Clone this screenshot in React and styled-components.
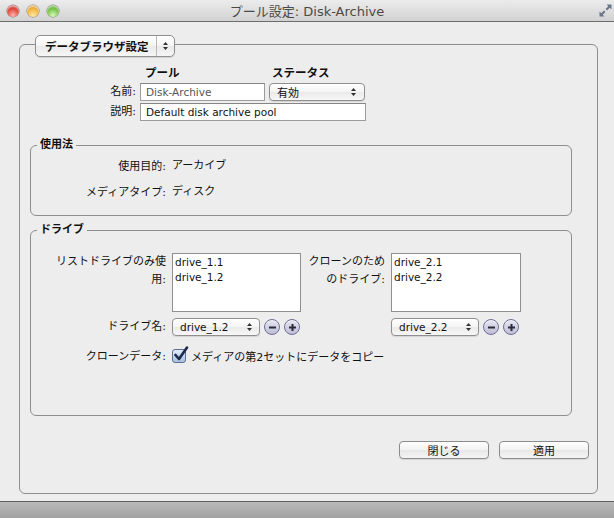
import styled, { createGlobalStyle } from 'styled-components';

const GlobalStyle = createGlobalStyle`
  * { box-sizing: border-box; }
  html, body { margin: 0; padding: 0; background: #ededed; }
  body {
    font-family: "DejaVu Sans", "Noto Sans CJK JP", sans-serif;
    font-size: 11px;
    color: #111;
  }
`;

const Window = styled.div`
  width: 614px;
  height: 518px;
  display: flex;
  flex-direction: column;
  background: #ededed;
  overflow: hidden;
`;

const TitleBar = styled.header`
  flex: none;
  height: 22px;
  display: grid;
  grid-template-columns: 1fr auto 1fr;
  align-items: center;
  padding: 0 4px;
  background: linear-gradient(#ececec, #d2d2d2);
  border-bottom: 1px solid #6d6d6d;
`;

const Lights = styled.div`
  display: flex;
  gap: 8px;
  margin-left: 3px;
`;

const tones = {
  red: ['#ffb3ab', '#e0463b', '#a1231a'],
  yellow: ['#ffe7a6', '#f0b43f', '#b07a1c'],
  green: ['#d6f5b8', '#78c449', '#417f24'],
};

const Light = styled.span`
  width: 12px;
  height: 12px;
  border-radius: 50%;
  background: radial-gradient(
    circle at 50% 85%,
    ${p => tones[p.$tone][0]} 0%,
    ${p => tones[p.$tone][1]} 55%,
    ${p => tones[p.$tone][2]} 100%
  );
  box-shadow: 0 0 0 0.5px rgba(0, 0, 0, 0.45), inset 0 2px 1px rgba(255, 255, 255, 0.55);
`;

const Title = styled.div`
  font-size: 13px;
  color: #4a4a4a;
  white-space: nowrap;
`;

const FullScreen = styled.svg`
  justify-self: end;
  margin-right: -3px;
`;

const Body = styled.main`
  flex: 1;
  display: flex;
  padding: 22px 16px 7px 19px;
  min-height: 0;
`;

const OuterBox = styled.section`
  flex: 1;
  display: flex;
  flex-direction: column;
  border: 1px solid #8e8e8e;
  border-radius: 6px;
  padding: 0 8px 0 10px;
`;

const TabPopup = styled.div`
  align-self: flex-start;
  margin: -10px 0 0 5px;
  width: 140px;
  height: 22px;
  display: flex;
  border: 1px solid #8f8f8f;
  border-radius: 5px;
  background: linear-gradient(#ffffff, #f3f3f3 50%, #e9e9e9 51%, #f6f6f6);
  box-shadow: 0 1px 1px rgba(0, 0, 0, 0.12);
`;

const TabLabel = styled.div`
  flex: 1;
  display: flex;
  align-items: center;
  padding-left: 9px;
  font-size: 11.5px;
  font-weight: bold;
`;

const TabArrows = styled.div`
  width: 18px;
  display: flex;
  align-items: center;
  justify-content: center;
  border-left: 1px solid #b9b9b9;
`;

const PoolGrid = styled.div`
  display: grid;
  grid-template-columns: 106px 125px 97px;
  column-gap: 4px;
  row-gap: 2px;
  margin-top: 5px;
`;

const ColHead = styled.div`
  height: 19px;
  display: flex;
  align-items: center;
  padding-left: ${p => p.$pad}px;
  font-size: 11.5px;
  font-weight: bold;
`;

const FieldLabel = styled.div`
  justify-self: end;
  align-self: ${p => (p.$top ? 'start' : 'center')};
  text-align: right;
  line-height: 18px;
  max-width: ${p => (p.$wrap ? `${p.$wrap}px` : 'none')};
  white-space: ${p => (p.$wrap ? 'normal' : 'nowrap')};
`;

const TextField = styled.input`
  width: 100%;
  height: 18px;
  margin: 0;
  padding: 0 5px;
  border: 1px solid #9c9c9c;
  border-top-color: #858585;
  background: #fff;
  font-family: "DejaVu Sans", "Noto Sans CJK JP", sans-serif;
  font-size: 10.5px;
  color: ${p => (p.$dim ? '#555' : '#111')};
  outline: none;
  grid-column: ${p => p.$span || 'auto'};
`;

const Popup = styled.div`
  width: ${p => p.$w}px;
  height: 18px;
  display: flex;
  align-items: center;
  justify-content: space-between;
  padding: 0 ${p => p.$pr}px 0 7px;
  border: 1px solid #8f8f8f;
  border-radius: 4px;
  background: linear-gradient(#ffffff, #f4f4f4 50%, #eaeaea 51%, #f7f7f7);
  box-shadow: 0 1px 1px rgba(0, 0, 0, 0.1);
  font-size: ${p => (p.$latin ? '10.5px' : '11px')};
  white-space: nowrap;
`;

const Group = styled.fieldset`
  margin: ${p => p.$mt}px 17px 0 0;
  padding: ${p => p.$pt}px 0 ${p => p.$pb}px 0;
  border: 1px solid #8e8e8e;
  border-radius: 6px;
  min-width: 0;
`;

const GroupTitle = styled.legend`
  margin-left: 6px;
  padding: 0 3px;
  font-size: 11px;
  font-weight: bold;
  line-height: 14px;
`;

const InfoGrid = styled.div`
  display: grid;
  grid-template-columns: 135px 1fr;
  column-gap: 6px;
  row-gap: 8px;
  line-height: 16px;
`;

const DriveGrid = styled.div`
  display: grid;
  grid-template-columns: 135px 129px 78px 130px;
  column-gap: 6px;
  row-gap: 6px;
`;

const ListBox = styled.div`
  height: 59px;
  padding: 1px 2px;
  border: 1px solid #8f8f8f;
  background: #fff;
  font-size: 10.5px;
  line-height: 15px;
`;

const PickRow = styled.div`
  display: flex;
  align-items: center;
  gap: 4px;
`;

const RoundButton = styled.span`
  width: 16px;
  height: 16px;
  border-radius: 50%;
  display: flex;
  align-items: center;
  justify-content: center;
  border: 1px solid #6e6e96;
  background: linear-gradient(#e6e6f2, #bdbdd6);
  box-shadow: inset 0 1px 0 rgba(255, 255, 255, 0.7);
`;

const CheckRow = styled.label`
  grid-column: 2 / span 3;
  display: flex;
  align-items: center;
  gap: 5px;
  margin-top: 6px;
  height: 16px;
  white-space: nowrap;
`;

const CheckBox = styled.span`
  position: relative;
  width: 14px;
  height: 14px;
  flex: none;
  border: 1px solid #5f6f8f;
  border-radius: 3px;
  background: linear-gradient(#e4ecf8, #a8c0e2);
`;

const CheckMark = styled.svg`
  position: absolute;
  left: 0px;
  top: -4px;
`;

const ButtonRow = styled.div`
  display: flex;
  justify-content: flex-end;
  gap: 10px;
  margin-top: 25px;
`;

const PushButton = styled.button`
  width: 90px;
  height: 18px;
  padding: 0;
  border: 1px solid #8c8c8c;
  border-radius: 4px;
  background: linear-gradient(#ffffff, #f2f2f2 50%, #e7e7e7 51%, #f5f5f5);
  box-shadow: 0 1px 1px rgba(0, 0, 0, 0.1);
  font-family: "DejaVu Sans", "Noto Sans CJK JP", sans-serif;
  font-size: 11px;
  color: #111;
`;

const StatusBar = styled.footer`
  flex: none;
  height: 17px;
  border-top: 1px solid #5f5f5f;
  background: linear-gradient(#b9b9b9, #a2a2a2);
`;

function UpDown() {
  return (
    <svg width="5" height="8" viewBox="0 0 5 8">
      <path d="M2.5 0 L5 3 H0 Z M2.5 8 L5 5 H0 Z" fill="#333" />
    </svg>
  );
}

function Sign({ plus }) {
  return (
    <svg width="9" height="9" viewBox="0 0 9 9">
      <rect x="1" y="3.5" width="7" height="2" fill="#2a2a3a" />
      {plus && <rect x="3.5" y="1" width="2" height="7" fill="#2a2a3a" />}
    </svg>
  );
}

function DrivePicker({ value }) {
  return (
    <PickRow>
      <Popup $w={88} $pr={7} $latin>
        {value}
        <UpDown />
      </Popup>
      <RoundButton><Sign /></RoundButton>
      <RoundButton><Sign plus /></RoundButton>
    </PickRow>
  );
}

export default function App() {
  return (
    <Window lang="ja">
      <GlobalStyle />
      <TitleBar>
        <Lights>
          <Light $tone="red" />
          <Light $tone="yellow" />
          <Light $tone="green" />
        </Lights>
        <Title>プール設定: Disk-Archive</Title>
        <FullScreen width="15" height="15" viewBox="0 0 15 15">
          <path d="M8.5 1.5 H13.5 V6.5 L11.7 4.7 L9 7.4 L7.6 6 L10.3 3.3 Z" fill="#6b7688" />
          <path d="M6.5 13.5 H1.5 V8.5 L3.3 10.3 L6 7.6 L7.4 9 L4.7 11.7 Z" fill="#6b7688" />
        </FullScreen>
      </TitleBar>

      <Body>
        <OuterBox>
          <TabPopup>
            <TabLabel>データブラウザ設定</TabLabel>
            <TabArrows><UpDown /></TabArrows>
          </TabPopup>

          <PoolGrid>
            <div />
            <ColHead $pad={5}>プール</ColHead>
            <ColHead $pad={3}>ステータス</ColHead>

            <FieldLabel>名前:</FieldLabel>
            <TextField readOnly value="Disk-Archive" $dim />
            <Popup $w={96} $pr={8}>
              有効
              <UpDown />
            </Popup>

            <FieldLabel>説明:</FieldLabel>
            <TextField readOnly value="Default disk archive pool" $span="2 / span 2" />
          </PoolGrid>

          <Group $mt={17} $pt={6} $pb={13}>
            <GroupTitle>使用法</GroupTitle>
            <InfoGrid>
              <FieldLabel>使用目的:</FieldLabel>
              <div>アーカイブ</div>
              <FieldLabel>メディアタイプ:</FieldLabel>
              <div>ディスク</div>
            </InfoGrid>
          </Group>

          <Group $mt={7} $pt={16} $pb={49}>
            <GroupTitle>ドライブ</GroupTitle>
            <DriveGrid>
              <FieldLabel $top $wrap={112}>リストドライブのみ使用:</FieldLabel>
              <ListBox>
                <div>drive_1.1</div>
                <div>drive_1.2</div>
              </ListBox>
              <FieldLabel $top $wrap={78}>クローンのためのドライブ:</FieldLabel>
              <ListBox>
                <div>drive_2.1</div>
                <div>drive_2.2</div>
              </ListBox>

              <FieldLabel>ドライブ名:</FieldLabel>
              <DrivePicker value="drive_1.2" />
              <div />
              <DrivePicker value="drive_2.2" />

              <FieldLabel style={{ marginTop: 6 }}>クローンデータ:</FieldLabel>
              <CheckRow>
                <CheckBox>
                  <CheckMark width="16" height="16" viewBox="0 0 16 16">
                    <path d="M2.5 9 L6 13 L14 1.5" fill="none" stroke="#1c2a4c" strokeWidth="2.6" strokeLinecap="round" strokeLinejoin="round" />
                  </CheckMark>
                </CheckBox>
                メディアの第2セットにデータをコピー
              </CheckRow>
            </DriveGrid>
          </Group>

          <ButtonRow>
            <PushButton>閉じる</PushButton>
            <PushButton>適用</PushButton>
          </ButtonRow>
        </OuterBox>
      </Body>

      <StatusBar />
    </Window>
  );
}
